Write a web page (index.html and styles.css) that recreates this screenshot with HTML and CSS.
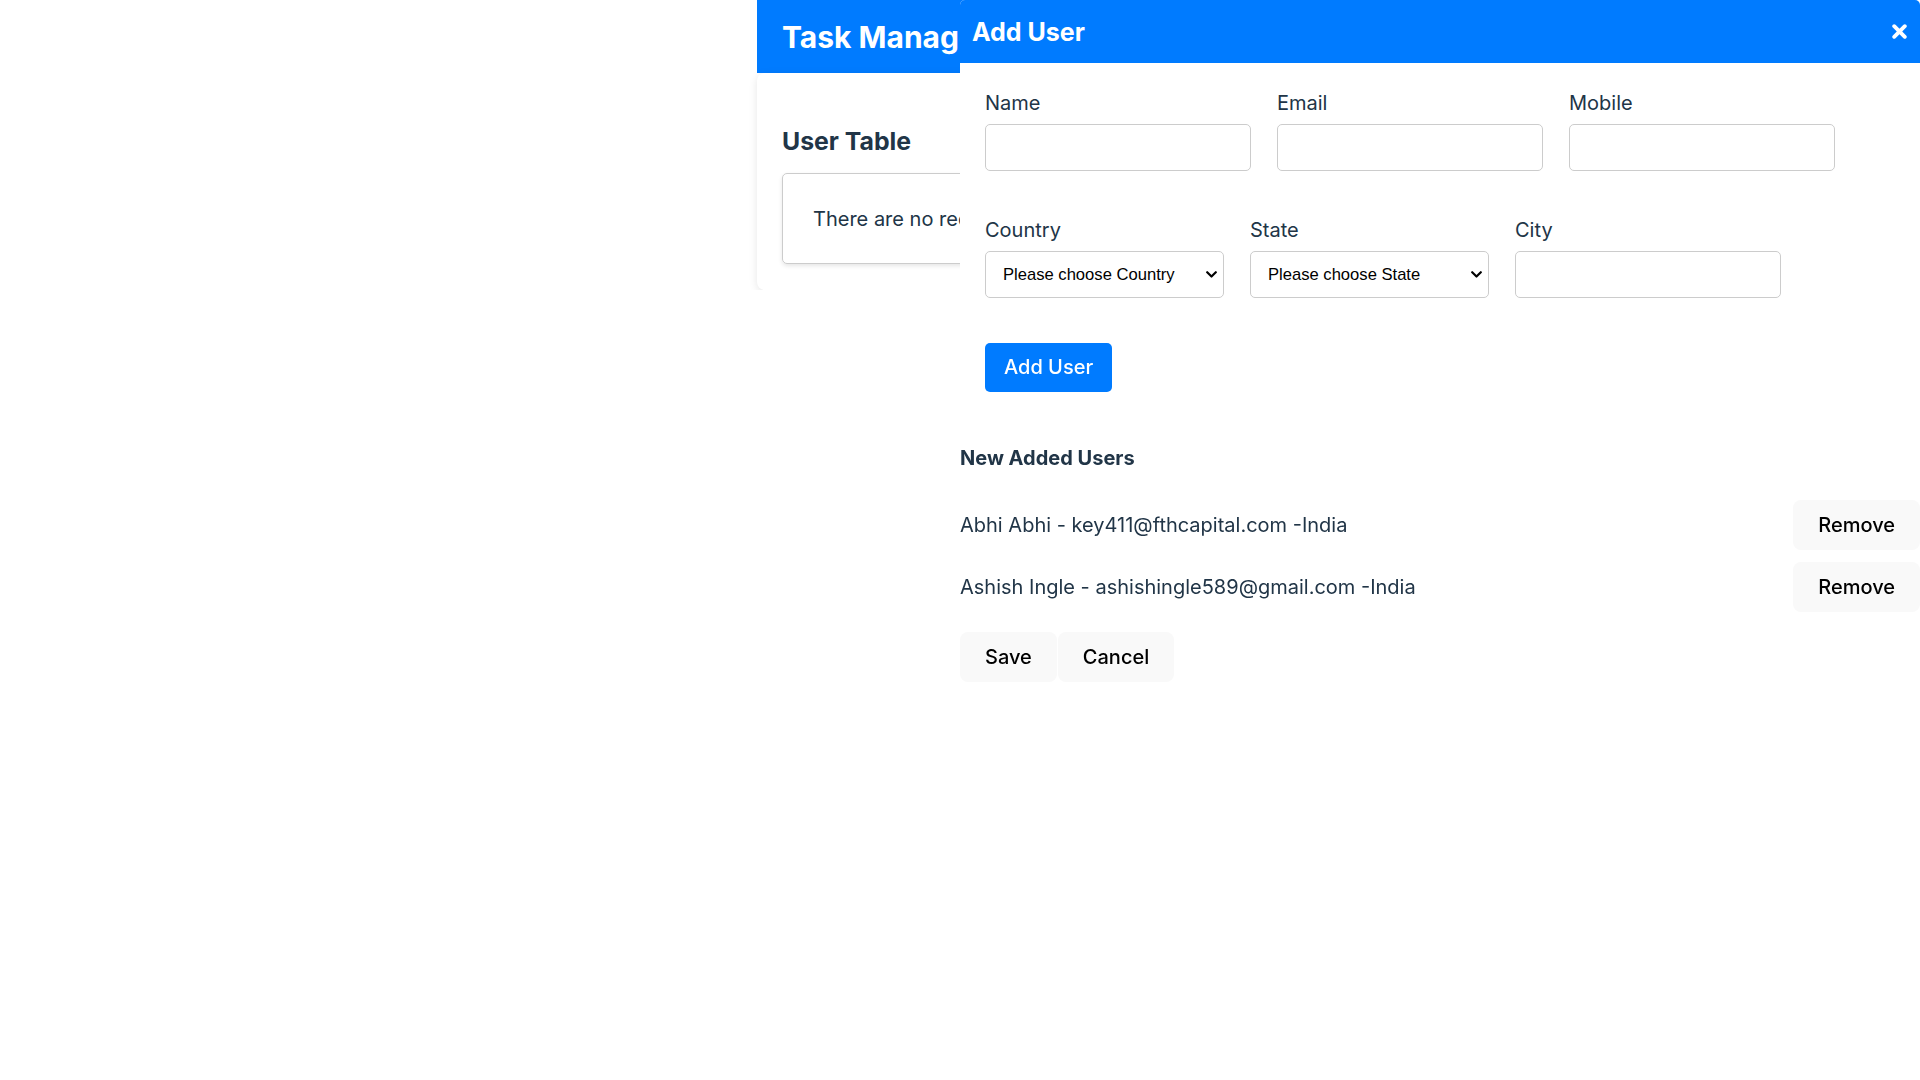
FILE: index.html
```html
<!DOCTYPE html>
<html lang="en">
<head>
<meta charset="utf-8">
<title>Task Manager</title>
<link rel="stylesheet" href="styles.css">
</head>
<body>
<div class="app">
  <header class="app-header">
    <h1 class="app-title">Task Manager</h1>
  </header>
  <section class="card">
    <h3 class="card-title">User Table</h3>
    <div class="empty-box">There are no records to display</div>
  </section>
</div>

<div class="modal">
  <div class="modal-header">
    <h2 class="modal-title">Add User</h2>
    <button class="close-btn" aria-label="Close">
      <svg width="15" height="15" viewBox="0 0 15 15"><path d="M2.2 2.2 L12.8 12.8 M12.8 2.2 L2.2 12.8" stroke="#fff" stroke-width="3.8" stroke-linecap="round" fill="none"/></svg>
    </button>
  </div>
  <form class="form">
    <div class="field-row">
      <div class="field"><label>Name</label><input class="input" type="text"></div>
      <div class="field"><label>Email</label><input class="input" type="text"></div>
      <div class="field"><label>Mobile</label><input class="input" type="text"></div>
    </div>
    <div class="field-row row-2">
      <div class="field"><label>Country</label>
        <span class="select-wrap">
          <select class="select"><option>Please choose Country</option></select>
          <svg class="chevron" width="11" height="7" viewBox="0 0 11 7"><path d="M1.2 1.2 L5.5 5.5 L9.8 1.2" stroke="#000" stroke-width="2.2" fill="none" stroke-linecap="round" stroke-linejoin="round"/></svg>
        </span>
      </div>
      <div class="field"><label>State</label>
        <span class="select-wrap">
          <select class="select"><option>Please choose State</option></select>
          <svg class="chevron" width="11" height="7" viewBox="0 0 11 7"><path d="M1.2 1.2 L5.5 5.5 L9.8 1.2" stroke="#000" stroke-width="2.2" fill="none" stroke-linecap="round" stroke-linejoin="round"/></svg>
        </span>
      </div>
      <div class="field"><label>City</label><input class="input" type="text"></div>
    </div>
    <button type="button" class="btn-primary">Add User</button>
  </form>
  <div class="added">
    <h4 class="added-title">New Added Users</h4>
    <div class="user-row">
      <span>Abhi Abhi - key411@fthcapital.com -India</span>
      <button class="btn-light">Remove</button>
    </div>
    <div class="user-row">
      <span>Ashish Ingle - ashishingle589@gmail.com -India</span>
      <button class="btn-light">Remove</button>
    </div>
    <div class="actions">
      <button class="btn-light">Save</button>
      <button class="btn-light">Cancel</button>
    </div>
  </div>
</div>
</body>
</html>
```
FILE: styles.css
```css
* { box-sizing: border-box; }
body {
  margin: 0;
  font-family: Inter, "Noto Sans", sans-serif;
  color: #213547;
  background: #fff;
}
.app {
  width: 406px;
  margin: 0 auto;
}
.app-header {
  background: #007bff;
  height: 73px;
  padding: 0 25px;
  display: flex;
  align-items: center;
}
.app-title {
  margin: 0;
  font-size: 30px;
  font-weight: 700;
  color: #fff;
  white-space: nowrap;
}
.card {
  background: #fff;
  border-radius: 8px;
  box-shadow: 0 2px 8px rgba(0,0,0,0.10);
  padding: 54px 25px 26px;
}
.card-title {
  margin: 0 0 17px;
  font-size: 24.8px;
  font-weight: 700;
  line-height: 29px;
}
.empty-box {
  height: 91px;
  border: 1px solid #ccc;
  border-radius: 5px;
  box-shadow: 0 2px 4px rgba(0,0,0,0.10);
  display: flex;
  align-items: center;
  padding: 0 30px;
  font-size: 20px;
  white-space: nowrap;
  overflow: hidden;
}
.modal {
  position: fixed;
  top: 0;
  left: 960px;
  width: 960px;
  height: 100vh;
  background: #fff;
  border-radius: 5px 5px 0 0;
}
.modal-header {
  height: 63px;
  background: #007bff;
  border-radius: 5px 5px 0 0;
  display: flex;
  align-items: center;
  justify-content: space-between;
  padding: 0 13px 0 12px;
}
.modal-title {
  margin: 0;
  font-size: 25px;
  font-weight: 700;
  color: #fff;
}
.close-btn {
  background: none;
  border: 0;
  padding: 0;
  width: 15px;
  height: 15px;
  display: flex;
}
.form {
  padding: 28px 25px 0 25px;
}
.field-row {
  display: flex;
  gap: 26px;
}
.row-2 {
  margin-top: 47px;
}
.field {
  display: flex;
  flex-direction: column;
}
.field label {
  font-size: 20px;
  line-height: 24px;
  margin-bottom: 9px;
}
.input {
  width: 266px;
  height: 47px;
  border: 1px solid #ccc;
  border-radius: 5px;
  font-size: 20px;
  padding: 0 12px;
}
.select-wrap {
  position: relative;
  display: block;
  width: 239px;
  height: 47px;
}
.select {
  appearance: none;
  -webkit-appearance: none;
  width: 239px;
  height: 47px;
  border: 1px solid #ccc;
  border-radius: 5px;
  background: #fff;
  color: #000;
  font-family: "Liberation Sans", Arial, sans-serif;
  font-size: 16.6px;
  padding: 0 24px 0 17px;
}
.chevron {
  position: absolute;
  right: 7px;
  top: 20px;
  pointer-events: none;
}
.btn-primary {
  margin-top: 45px;
  background: #007bff;
  color: #fff;
  border: 1px solid transparent;
  border-radius: 5px;
  font-family: inherit;
  font-size: 20px;
  font-weight: 500;
  line-height: 24px;
  padding: 11px 18px 12px;
}
.added {
  margin-top: 54px;
}
.added-title {
  margin: 0 0 30px;
  font-size: 20px;
  font-weight: 700;
  line-height: 24px;
}
.user-row {
  display: flex;
  justify-content: space-between;
  align-items: center;
  font-size: 20px;
  margin-bottom: 12px;
}
.btn-light {
  background: #f9f9f9;
  color: #000;
  border: 1px solid transparent;
  border-radius: 8px;
  font-family: inherit;
  font-size: 20px;
  font-weight: 500;
  line-height: 24px;
  padding: 12px 24px;
}
.actions {
  display: flex;
  gap: 1px;
  margin-top: 20px;
}
```
